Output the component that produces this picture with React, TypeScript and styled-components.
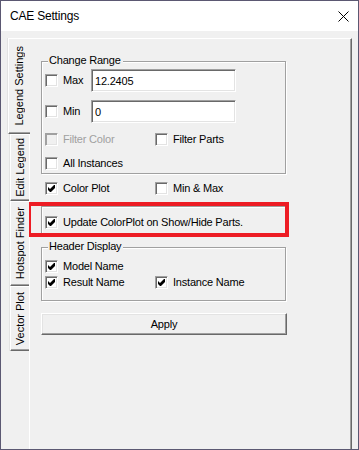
import styled, { createGlobalStyle } from 'styled-components'

const GlobalStyle = createGlobalStyle`
  html, body {
    margin: 0;
    padding: 0;
    background: #f0f0f0;
  }
  body {
    font-family: "Liberation Sans", Arial, sans-serif;
    font-size: 11px;
    color: #000;
  }
`;

const Window = styled.div`
  width: 359px;
  height: 450px;
  box-sizing: border-box;
  border: 1px solid #5b5872;
  display: flex;
  flex-direction: column;
  overflow: hidden;
  background: #f0f0f0;
`;

const TitleBar = styled.div`
  height: 30px;
  flex-shrink: 0;
  background: #fff;
  display: flex;
  align-items: center;
  justify-content: space-between;
  padding: 0 9px;
  font-size: 12px;
  line-height: 16px;
  letter-spacing: -0.2px;
`;

const Body = styled.div`
  flex: 1;
  display: flex;
  padding: 7px 6px 0 7px;
`;

const TabStrip = styled.div`
  width: 22px;
  flex-shrink: 0;
  display: flex;
  flex-direction: column;
  margin-right: -1px;
  position: relative;
  z-index: 1;
`;

const Tab = styled.div<{ $active?: boolean; $len: number }>`
  box-sizing: border-box;
  width: ${p => (p.$active ? '22px' : '19px')};
  height: ${p => p.$len}px;
  margin-left: ${p => (p.$active ? '0' : '2px')};
  display: flex;
  align-items: center;
  justify-content: center;
  background: #f0f0f0;
  border-top: 1px solid #fff;
  border-left: 1px solid #fff;
  border-bottom: 1px solid #696969;
  box-shadow: inset 0 -1px 0 #a0a0a0, -1px 0 0 #e3e3e3;
`;

const TabLabel = styled.span`
  writing-mode: vertical-rl;
  transform: rotate(180deg);
  line-height: 13px;
  white-space: nowrap;
`;

const Panel = styled.div`
  flex: 1;
  box-sizing: border-box;
  border-top: 1px solid #fff;
  border-left: 1px solid #fff;
  border-right: 1px solid #696969;
  box-shadow: inset -1px 0 0 #a0a0a0;
  padding-left: 11px;
  letter-spacing: -0.2px;
  line-height: 13px;
`;

const Group = styled.div<{ $mt: number; $pad: string }>`
  position: relative;
  width: 245px;
  box-sizing: border-box;
  margin-top: ${p => p.$mt}px;
  padding: ${p => p.$pad};
  border: 1px solid #a0a0a0;
  box-shadow: inset 1px 1px 0 #fff, 1px 1px 0 #fff;
`;

const Caption = styled.span`
  position: absolute;
  top: -8px;
  left: 6px;
  padding: 0 2px 0 1px;
  background: #f0f0f0;
  line-height: 13px;
`;

const Row = styled.div<{ $h?: number; $mt?: number }>`
  display: flex;
  align-items: center;
  height: ${p => p.$h ?? 16}px;
  margin-top: ${p => p.$mt ?? 0}px;
`;

const CheckItem = styled.label<{ $w?: number; $disabled?: boolean }>`
  display: inline-flex;
  align-items: center;
  gap: 5px;
  height: 16px;
  width: ${p => (p.$w ? `${p.$w}px` : 'auto')};
  flex-shrink: 0;
  color: ${p => (p.$disabled ? '#a0a0a0' : '#000')};
  white-space: nowrap;
`;

const Box = styled.span<{ $disabled?: boolean }>`
  width: 13px;
  height: 13px;
  box-sizing: border-box;
  flex-shrink: 0;
  display: flex;
  align-items: center;
  justify-content: center;
  background: ${p => (p.$disabled ? '#f0f0f0' : '#fff')};
  border: 1px solid;
  border-color: #a0a0a0 #fff #fff #a0a0a0;
  box-shadow: inset 1px 1px 0 ${p => (p.$disabled ? '#a0a0a0' : '#696969')}, inset -1px -1px 0 #e3e3e3;
`;

const Field = styled.input`
  width: 145px;
  height: 23px;
  box-sizing: border-box;
  margin: 0;
  padding: 0 3px;
  background: #fff;
  border: 1px solid;
  border-color: #a0a0a0 #fff #fff #a0a0a0;
  box-shadow: inset 1px 1px 0 #696969, inset -1px -1px 0 #e3e3e3;
  font-family: "Liberation Sans", Arial, sans-serif;
  font-size: 11px;
  letter-spacing: -0.2px;
  color: #000;
  outline: none;
`;

const Highlight = styled.span`
  position: absolute;
  top: -5px;
  bottom: -3px;
  left: -15px;
  right: -4px;
  border: 4px solid #ed1c24;
  pointer-events: none;
`;

const Button = styled.button`
  display: block;
  width: 246px;
  height: 22px;
  margin-top: 12px;
  padding: 0;
  background: #f0f0f0;
  border: 1px solid;
  border-color: #fff #696969 #696969 #fff;
  box-shadow: inset -1px -1px 0 #a0a0a0, inset 1px 1px 0 #e3e3e3;
  font-family: "Liberation Sans", Arial, sans-serif;
  font-size: 11px;
  letter-spacing: -0.2px;
  color: #000;
`;

const Check = ({
  label,
  checked,
  disabled,
  w,
}: {
  label: string
  checked?: boolean
  disabled?: boolean
  w?: number
}) => (
  <CheckItem $w={w} $disabled={disabled}>
    <Box $disabled={disabled}>
      {checked && (
        <svg width="7" height="7" viewBox="0 0 7 7">
          <polygon points="0,2 2,4 6,0 7,0 7,3 3,7 2,7 0,5" fill="#000" />
        </svg>
      )}
    </Box>
    {label}
  </CheckItem>
);

const tabs = [
  { name: 'Legend Settings', len: 96 },
  { name: 'Edit Legend', len: 67 },
  { name: 'Hotspot Finder', len: 85 },
  { name: 'Vector Plot', len: 65 },
];

export default function App() {
  return (
    <>
      <GlobalStyle />
      <Window>
        <TitleBar>
          <span>CAE Settings</span>
          <svg width="11" height="11" viewBox="0 0 11 11">
            <path d="M0.5 0.5 L10.5 10.5 M10.5 0.5 L0.5 10.5" stroke="#000" strokeWidth="1" />
          </svg>
        </TitleBar>
        <Body>
          <TabStrip>
            {tabs.map((t, i) => (
              <Tab key={t.name} $active={i === 0} $len={t.len}>
                <TabLabel>{t.name}</TabLabel>
              </Tab>
            ))}
          </TabStrip>
          <Panel>
            <Group $mt={22} $pad="7px 0 2px 3px">
              <Caption>Change Range</Caption>
              <Row $h={23}>
                <Check label="Max" w={46} />
                <Field defaultValue="12.2405" />
              </Row>
              <Row $h={23} $mt={8}>
                <Check label="Min" w={46} />
                <Field defaultValue="0" />
              </Row>
              <Row $mt={8}>
                <Check label="Filter Color" disabled w={110} />
                <Check label="Filter Parts" />
              </Row>
              <Row $mt={8}>
                <Check label="All Instances" />
              </Row>
            </Group>
            <Row $mt={6} style={{ paddingLeft: 4 }}>
              <Check label="Color Plot" checked w={110} />
              <Check label="Min & Max" />
            </Row>
            <Group $mt={10} $pad="7px 0 4px 3px">
              <Highlight />
              <Row>
                <Check label="Update ColorPlot on Show/Hide Parts." checked />
              </Row>
            </Group>
            <Group $mt={12} $pad="10px 0 10px 3px">
              <Caption>Header Display</Caption>
              <Row>
                <Check label="Model Name" checked />
              </Row>
              <Row>
                <Check label="Result Name" checked w={110} />
                <Check label="Instance Name" checked />
              </Row>
            </Group>
            <Button>Apply</Button>
          </Panel>
        </Body>
      </Window>
    </>
  )
}
